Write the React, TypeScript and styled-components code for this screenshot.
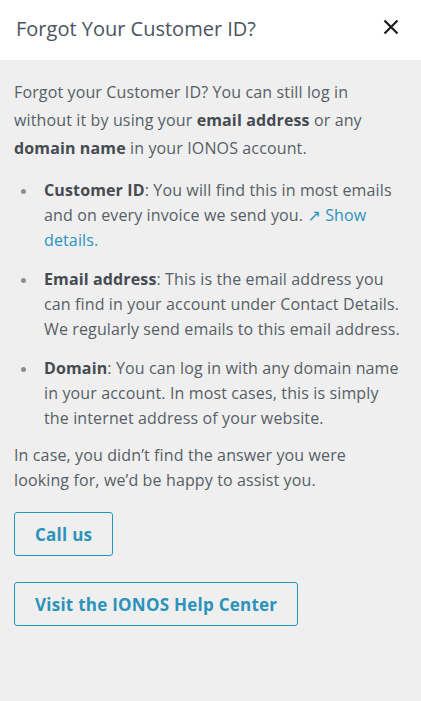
import React from "react";
import styled, { createGlobalStyle } from "styled-components";

const Global = createGlobalStyle`
  html, body { margin: 0; padding: 0; background: #efefef; }
  body { font-family: "Open Sans", "DejaVu Sans", sans-serif; }
  * { box-sizing: border-box; }
`;

const Page = styled.div`
  width: 421px;
  min-height: 701px;
  background: #efefef;
  display: flex;
  flex-direction: column;
`;

const Header = styled.header`
  height: 60px;
  background: #ffffff;
  display: flex;
  align-items: center;
  justify-content: space-between;
  padding: 0 20px 4px 16px;
`;

const Title = styled.h1`
  margin: 0;
  font-size: 20px;
  font-weight: 400;
  color: #4a5461;
  letter-spacing: 0;
`;

const Close = styled.button`
  border: 0;
  background: none;
  padding: 0;
  width: 20px;
  height: 20px;
  display: flex;
  align-items: center;
  justify-content: center;
  cursor: pointer;
  margin-top: -2px;
`;

const Body = styled.main`
  padding: 18px 18px 0 14px;
  color: #565e66;
  font-size: 16px;
  letter-spacing: 0.13px;
`;

const Para = styled.p`
  margin: 0;
  line-height: 28px;
`;

const Strong = styled.b`
  font-weight: 700;
  color: #454b51;
`;

const List = styled.ul`
  margin: 16px 0 0 0;
  padding: 0 0 0 30px;
  list-style: none;
`;

const Item = styled.li`
  position: relative;
  line-height: 25px;
  margin-bottom: 14px;
  &::before {
    content: "";
    position: absolute;
    left: -23px;
    top: 11px;
    width: 5px;
    height: 5px;
    border-radius: 50%;
    background: #8a8f94;
  }
`;

const Link = styled.a`
  color: #2a93c0;
  text-decoration: none;
`;

const Tail = styled(Para)`
  margin-top: -2px;
  line-height: 25px;
`;

const Buttons = styled.div`
  display: flex;
  flex-direction: column;
  align-items: flex-start;
  gap: 26px;
  margin-top: 19px;
`;

const OutlineButton = styled.button`
  font-family: "Open Sans", "DejaVu Sans", sans-serif;
  font-weight: 700;
  font-size: 17px;
  letter-spacing: 0.25px;
  color: #2b93bb;
  background: transparent;
  border: 1px solid #2196c0;
  border-radius: 3px;
  height: 44px;
  padding: 0 20px;
  cursor: pointer;
`;

export default function App() {
  return (
    <Page>
      <Global />
      <Header>
        <Title>Forgot Your Customer ID?</Title>
        <Close aria-label="Close">
          <svg width="16" height="16" viewBox="0 0 16 16">
            <path d="M1.5 1.5 L14.5 14.5 M14.5 1.5 L1.5 14.5" stroke="#1b1b1b" strokeWidth="2.2" strokeLinecap="butt" />
          </svg>
        </Close>
      </Header>
      <Body>
        <Para>
          Forgot your Customer ID? You can still log in without it by using your{" "}
          <Strong>email address</Strong> or any <Strong>domain name</Strong> in your IONOS account.
        </Para>
        <List>
          <Item>
            <Strong>Customer ID</Strong>: You will find this in most emails and on every invoice we send you.{" "}
            <Link href="#">↗ Show details.</Link>
          </Item>
          <Item>
            <Strong>Email address</Strong>: This is the email address you can find in your account under Contact Details. We regularly send emails to this email address.
          </Item>
          <Item>
            <Strong>Domain</Strong>: You can log in with any domain name in your account. In most cases, this is simply the internet address of your website.
          </Item>
        </List>
        <Tail>
          In case, you didn’t find the answer you were looking for, we’d be happy to assist you.
        </Tail>
        <Buttons>
          <OutlineButton>Call us</OutlineButton>
          <OutlineButton>Visit the IONOS Help Center</OutlineButton>
        </Buttons>
      </Body>
    </Page>
  );
}
